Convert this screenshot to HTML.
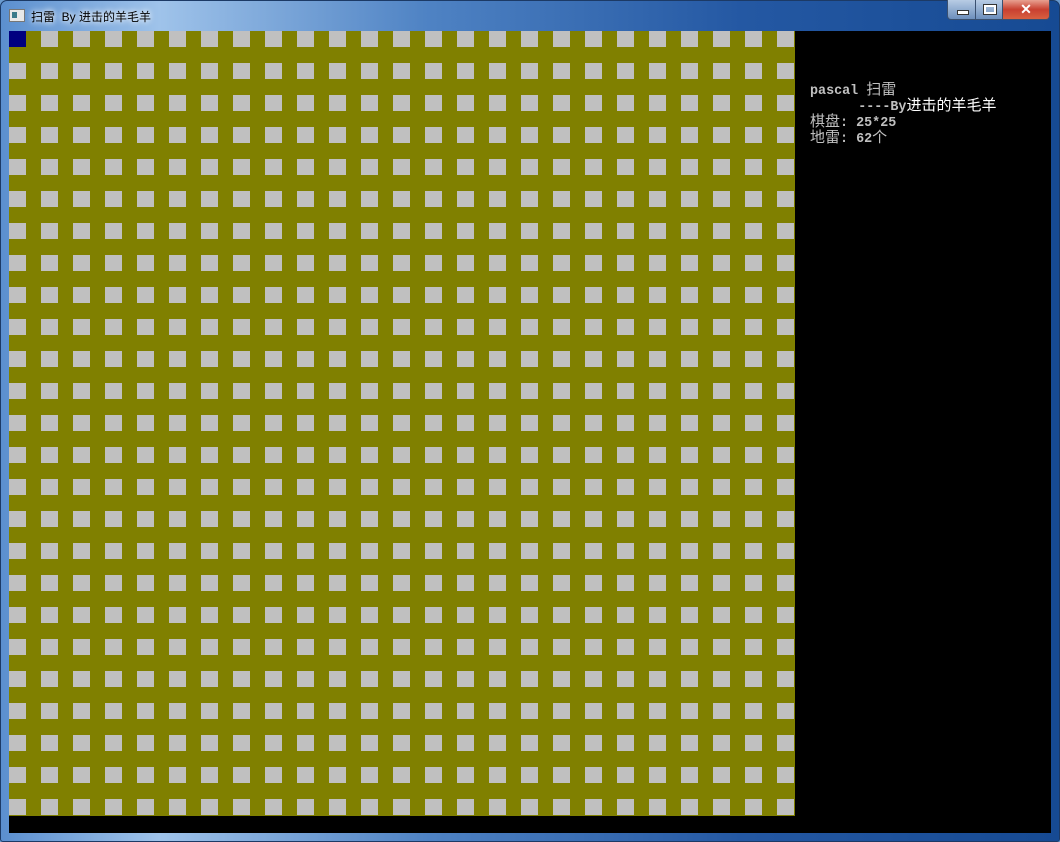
<html><head><style>
body{margin:0;width:1060px;height:842px;overflow:hidden;background:#6a9bd0;position:relative;font-family:"Liberation Sans","Noto Sans CJK SC",sans-serif}
.frame{position:absolute;left:0;top:0;width:1058px;height:840px;border:1px solid #1c3a66;border-radius:7px 7px 3px 3px;background:linear-gradient(90deg,#5b8fcf 0%,#9fc3ea 15%,#4f83c4 40%,#2458a3 70%,#164a93 100%)}
.title{position:absolute;left:31px;top:8px;font-size:12px;color:#000;text-shadow:0 0 8px #fff,0 0 6px #fff}
.icon{position:absolute;left:9px;top:9px;width:14px;height:11px;background:#e8e8e8;border:1px solid #777}
.icon:after{content:"";position:absolute;left:2px;top:2px;width:5px;height:6px;background:#3a7a8a}
.client{position:absolute;left:9px;top:31px;width:1042px;height:802px;background:#000}
.txt{position:absolute;left:801px;top:50px;color:#c0c0c0;font-family:"Liberation Mono","Noto Sans CJK SC",monospace;font-size:13.4px;font-weight:bold;white-space:pre}
.txt div{height:16px;line-height:16px;overflow:visible}
.cjk{font-weight:normal;font-size:15px;line-height:16px;font-family:"Noto Sans CJK SC",sans-serif}
.btn{position:absolute;top:0;height:19px;border:1px solid #3a5070;border-top:none}
</style></head><body>
<div class="frame"></div>
<div class="icon"></div>
<div class="title">扫雷&nbsp; By 进击的羊毛羊</div>
<div class="btn" style="left:947px;width:27px;background:linear-gradient(#b8cce4,#6d8fbd);border-radius:0 0 0 4px"><div style="position:absolute;left:9px;top:10px;width:10px;height:3px;background:#fff;border:1px solid #333"></div></div>
<div class="btn" style="left:975px;width:26px;background:linear-gradient(#b8cce4,#6d8fbd)"><div style="position:absolute;left:8px;top:5px;width:8px;height:5px;border:2px solid #fff;outline:1px solid #333"></div></div>
<div class="btn" style="left:1002px;width:46px;background:linear-gradient(#e8a090,#c84030 50%,#d86040);border-radius:0 0 4px 0;color:#fff;font-weight:bold;font-size:14px;text-align:center;line-height:18px">✕</div>
<div class="client">
<svg width="786" height="785" style="position:absolute;left:0;top:0">
<defs><pattern id="p" width="32" height="32" patternUnits="userSpaceOnUse"><rect width="32" height="32" fill="#808000"/><rect width="17" height="16" fill="#c0c0c0"/></pattern></defs>
<rect width="786" height="785" fill="url(#p)"/>
<rect width="17" height="16" fill="#000080"/>
</svg>
<div class="txt"><div>pascal <span class="cjk">扫雷</span></div><div>      ----By<span class="cjk" style="color:#fff">进击的羊毛羊</span></div><div><span class="cjk">棋盘</span>: 25*25</div><div><span class="cjk">地雷</span>: 62<span class="cjk">个</span></div></div>
</div>
</body></html>
